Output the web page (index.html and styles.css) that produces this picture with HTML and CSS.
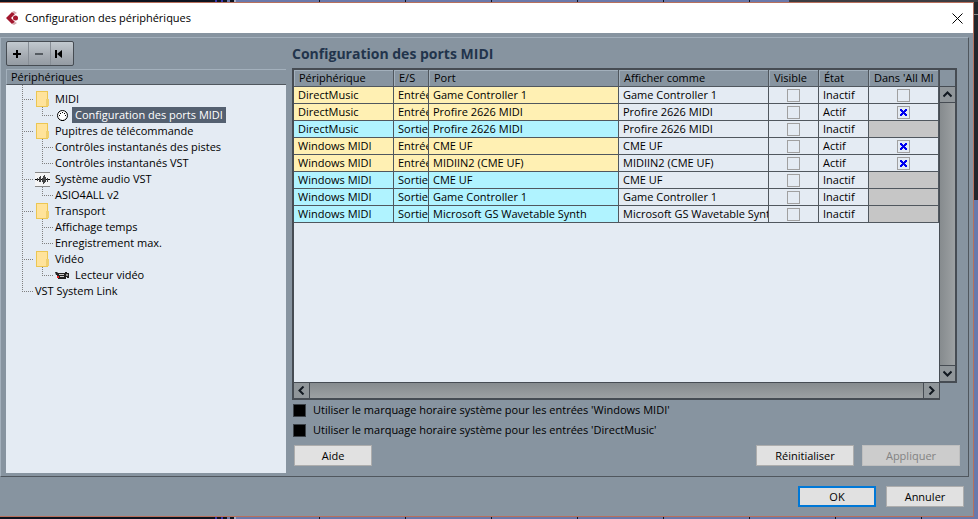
FILE: index.html
```html
<!DOCTYPE html>
<html lang="fr">
<head>
  <meta charset="UTF-8">
  <meta name="viewport" content="width=device-width, initial-scale=1.0">
  <title>Configuration des périphériques</title>
  <link rel="stylesheet" href="styles.css">
</head>
<body>
  <div class="window">
    <header class="titlebar">
      <svg class="app-icon" width="14" height="16" viewBox="0 0 14 16">
        <path d="M0 8l6-6 3 2-4 4 4 4-3 2z" fill="#a3172e"/>
        <path d="M6 2l2-1 3 2-2 1zM6 14l2 1 3-2-2-1z" fill="#d3a3aa"/>
        <circle cx="9.500" cy="8" r="2.500" fill="#a3172e"/>
      </svg>
      <h1>Configuration des périphériques</h1>
      <button class="close" aria-label="Fermer">
        <svg width="11" height="11" viewBox="0 0 11 11"><path d="M.5.5l10 10M10.500.5l-10 10" stroke="#000" fill="none"/></svg>
      </button>
    </header>

    <main class="panel">
      <section class="devices">
        <div class="toolbar">
          <button aria-label="Ajouter"><svg width="20" height="22" viewBox="0 0 20 22"><path d="M6 11h8M10 7v8" stroke="#000" stroke-width="2"/></svg></button>
          <button aria-label="Supprimer"><svg width="20" height="22" viewBox="0 0 20 22"><path d="M6 11h8" stroke="#555b61" stroke-width="2"/></svg></button>
          <button aria-label="Réinitialiser"><svg width="20" height="22" viewBox="0 0 20 22"><path d="M4 7h2v8H4zM11 7v8l-5-4z"/></svg></button>
        </div>
        <h2 class="devices-head">Périphériques</h2>
        <div class="devices-list">
          <ul class="tree">
            <li>
              <div class="node"><i class="folder"></i><span>MIDI</span></div>
              <ul>
                <li><div class="node selected">
                  <svg width="15" height="15" viewBox="0 0 15 15"><circle cx="7.500" cy="7.500" r="5" fill="#fff" stroke="#000"/><path d="M4 7h1v1H4zM10 7h1v1h-1zM5 5h1v1H5zM9 5h1v1H9zM7 4h1v1H7zM6 12h3v1H6z"/></svg>
                  <span>Configuration des ports MIDI</span></div></li>
              </ul>
            </li>
            <li>
              <div class="node"><i class="folder"></i><span>Pupitres de télécommande</span></div>
              <ul>
                <li><div class="node"><span>Contrôles instantanés des pistes</span></div></li>
                <li><div class="node"><span>Contrôles instantanés VST</span></div></li>
              </ul>
            </li>
            <li>
              <div class="node">
                <svg width="15" height="15" viewBox="0 0 15 15"><path d="M0 0h15v15H0z" fill="#f4f4f4"/><path d="M0 .5h15M0 14.500h15" stroke="#888"/><path d="M0 7.500h15" stroke="#000" stroke-width="1"/><path d="M2.500 6v3M4.500 5v5M5.500 4v6M7.500 6v4M8.500 4v8M9.500 3v8M10.500 5v5M12.500 6v4" stroke="#444"/></svg>
                <span>Système audio VST</span></div>
              <ul>
                <li><div class="node"><span>ASIO4ALL v2</span></div></li>
              </ul>
            </li>
            <li>
              <div class="node"><i class="folder"></i><span>Transport</span></div>
              <ul>
                <li><div class="node"><span>Affichage temps</span></div></li>
                <li><div class="node"><span>Enregistrement max.</span></div></li>
              </ul>
            </li>
            <li>
              <div class="node"><i class="folder"></i><span>Vidéo</span></div>
              <ul>
                <li><div class="node">
                  <svg width="15" height="15" viewBox="0 0 15 15"><path d="M0 4h2l1 1h7V4h2v1h2v5h-2V9h-1v2H3V8H2V7H1z" fill="#222"/><path d="M4 6h5v1H4zM5 8h4v1H5z" fill="#ccc"/><path d="M11 6h2v2h-2z" fill="#999"/><path d="M2 8h2v2H2z" fill="#e02020"/></svg>
                  <span>Lecteur vidéo</span></div></li>
              </ul>
            </li>
            <li><div class="node"><span>VST System Link</span></div></li>
          </ul>
        </div>
      </section>

      <section class="settings">
        <h2>Configuration des ports MIDI</h2>
        <div class="list">
          <div class="list-main">
            <div class="view">
              <table>
                <colgroup>
                  <col class="c-device"><col class="c-io"><col><col class="c-name"><col class="c-small"><col class="c-small"><col class="c-all">
                </colgroup>
                <thead>
                  <tr><th>Périphérique</th><th>E/S</th><th>Port</th><th>Afficher comme</th><th>Visible</th><th>État</th><th>Dans 'All MI</th></tr>
                </thead>
                <tbody>
                  <tr class="in"><td>DirectMusic</td><td>Entrée</td><td>Game Controller 1</td><td>Game Controller 1</td><td class="check"><input type="checkbox" aria-label="Visible"></td><td>Inactif</td><td class="check"><input type="checkbox" aria-label="All MIDI"></td></tr>
                  <tr class="in"><td>DirectMusic</td><td>Entrée</td><td>Profire 2626 MIDI</td><td>Profire 2626 MIDI</td><td class="check"><input type="checkbox" aria-label="Visible"></td><td>Actif</td><td class="check"><input type="checkbox" aria-label="All MIDI" checked></td></tr>
                  <tr class="out"><td>DirectMusic</td><td>Sortie</td><td>Profire 2626 MIDI</td><td>Profire 2626 MIDI</td><td class="check"><input type="checkbox" aria-label="Visible"></td><td>Inactif</td><td class="none"></td></tr>
                  <tr class="in"><td>Windows MIDI</td><td>Entrée</td><td>CME UF</td><td>CME UF</td><td class="check"><input type="checkbox" aria-label="Visible"></td><td>Actif</td><td class="check"><input type="checkbox" aria-label="All MIDI" checked></td></tr>
                  <tr class="in"><td>Windows MIDI</td><td>Entrée</td><td>MIDIIN2 (CME UF)</td><td>MIDIIN2 (CME UF)</td><td class="check"><input type="checkbox" aria-label="Visible"></td><td>Actif</td><td class="check"><input type="checkbox" aria-label="All MIDI" checked></td></tr>
                  <tr class="out"><td>Windows MIDI</td><td>Sortie</td><td>CME UF</td><td>CME UF</td><td class="check"><input type="checkbox" aria-label="Visible"></td><td>Inactif</td><td class="none"></td></tr>
                  <tr class="out"><td>Windows MIDI</td><td>Sortie</td><td>Game Controller 1</td><td>Game Controller 1</td><td class="check"><input type="checkbox" aria-label="Visible"></td><td>Inactif</td><td class="none"></td></tr>
                  <tr class="out"><td>Windows MIDI</td><td>Sortie</td><td>Microsoft GS Wavetable Synth</td><td>Microsoft GS Wavetable Synth</td><td class="check"><input type="checkbox" aria-label="Visible"></td><td>Inactif</td><td class="none"></td></tr>
                </tbody>
              </table>
            </div>
            <div class="hscroll">
              <button aria-label="Gauche"><svg width="9" height="9" viewBox="0 0 9 9"><path d="M6.500.5l-4 4 4 4"/></svg></button>
              <button aria-label="Droite"><svg width="9" height="9" viewBox="0 0 9 9"><path d="M2.500.5l4 4-4 4"/></svg></button>
            </div>
          </div>
          <div class="vscroll">
            <div class="corner"></div>
            <div class="track">
              <button aria-label="Haut"><svg width="9" height="9" viewBox="0 0 9 9"><path d="M.5 6.500l4-4 4 4"/></svg></button>
              <button aria-label="Bas"><svg width="9" height="9" viewBox="0 0 9 9"><path d="M.5 2.500l4 4 4-4"/></svg></button>
            </div>
          </div>
        </div>
        <div class="options">
          <label><input type="checkbox">Utiliser le marquage horaire système pour les entrées 'Windows MIDI'</label>
          <label><input type="checkbox">Utiliser le marquage horaire système pour les entrées 'DirectMusic'</label>
        </div>
        <div class="actions">
          <button class="btn help">Aide</button>
          <button class="btn wide">Réinitialiser</button>
          <button class="btn wide" disabled>Appliquer</button>
        </div>
      </section>
    </main>

    <footer class="footer">
      <button class="btn default">OK</button>
      <button class="btn">Annuler</button>
    </footer>
  </div>
</body>
</html>
```

FILE: styles.css
```css
* { margin: 0; padding: 0; box-sizing: border-box; }

body {
  min-height: 100vh;
  padding: 2px 4px 2px 0;
  display: flex;
  background:
    linear-gradient(to right, #0d1420 0 215px, #3a3ab0 215px 217px, #0d1420 217px 221px, #3a3ab0 221px 223px, #0d1420 223px 227px, #6a79ab 227px 230px, #0d1420 230px 234px, #a5adc5 234px 236px) 0 0 / 236px 100% no-repeat,
    linear-gradient(#3c3d42, #3c3d42) right 0 top 0 / 189px 2px no-repeat,
    linear-gradient(#8a8a8a, #8a8a8a) right 0 top 14px / 4px 1px no-repeat,
    linear-gradient(#22262b, #22262b) right top / 4px 200px no-repeat,
    repeating-linear-gradient(to right, #6a79ab 0 61px, #0d1420 61px 62px, #6a79ab 62px 86px);
  font: 11px/16px "Open Sans", "Noto Sans", sans-serif;
  color: #000;
}
button, input { font: inherit; color: inherit; }
svg { display: block; flex: none; }
ul { list-style: none; }

.window {
  flex: 1;
  display: flex;
  flex-direction: column;
  background: #8794a0;
  border: 1px solid #b8705c;
  border-left: 0;
}

.titlebar { display: flex; align-items: center; height: 30px; padding: 0 10px 0 6px; background: #fff; }
.titlebar h1 { flex: 1; margin-left: 5px; font-size: 11px; font-weight: 400; }
.close { border: 0; background: none; }

/* main panel */
.panel {
  flex: 1;
  display: flex;
  gap: 6px;
  margin: 4px 4px 0 0;
  padding: 3px 0 3px 5px;
  border: 1px solid #a3b0bc;
  border-right-color: #50575e;
  border-bottom-color: #50575e;
}
.devices { flex: 0 0 280px; display: flex; flex-direction: column; }
.toolbar {
  display: flex;
  align-self: flex-start;
  border: 1px solid #464c53;
  border-radius: 2px;
  background: linear-gradient(#c2c9cf, #a7adb4 55%, #949ba3);
}
.toolbar button { width: 22px; height: 23px; border: 0; border-right: 1px solid #878e96; background: none; }
.toolbar button:last-child { border-right: 0; }
.devices-head {
  height: 16px;
  margin-top: 3px;
  padding-left: 4px;
  border: 1px solid #a3b0bc;
  border-width: 1px 0 1px 1px;
  border-bottom-color: #50575e;
  font-size: 11px;
  font-weight: 400;
  line-height: 14px;
}
.devices-list { flex: 1; background: #e4ebf3; padding-left: 16px; }

/* tree: each item draws its own stretch of the vertical guide */
.tree li { background: repeating-linear-gradient(#808080 0 1px, transparent 1px 2px) 0 0 / 1px 100% no-repeat; }
.tree li:last-child { background-size: 1px 8px; }
.tree > li:first-child { padding-top: 6px; }
.tree ul { margin-left: 20px; }
.node { display: flex; align-items: center; height: 16px; white-space: nowrap; }
.node::before {
  content: "";
  width: 11px;
  height: 1px;
  margin-right: 2px;
  background: repeating-linear-gradient(to right, #808080 0 1px, transparent 1px 2px);
}
.node i, .node svg { margin-right: 5px; }
.node span { margin-left: -3px; padding: 0 3px; }
.selected span { background: #546070; color: #fff; }
.folder {
  width: 15px;
  height: 16px;
  background:
    linear-gradient(#f0d070, #f0d070) 11px 8px / 3px 7px no-repeat,
    linear-gradient(#ffe39b, #ffe39b) 2px 1px / 10px 14px no-repeat,
    linear-gradient(#ecc652, #ecc652) 1px 0 / 12px 16px no-repeat;
}

/* port list */
.settings { flex: 1; min-width: 0; display: flex; flex-direction: column; }
.settings h2 { color: #22344c; font-size: 14px; line-height: 22px; margin-top: 2px; }
.list { flex: 1; display: flex; margin: 3px 11px 0 0; }
.list-main {
  flex: 1;
  min-width: 0;
  display: flex;
  flex-direction: column;
  border: 2px solid #464c53;
  border-right-width: 1px;
}
.view { flex: 1; background: #e4ebf3; }
table { width: 100%; table-layout: fixed; border-collapse: separate; border-spacing: 0; }
.c-device { width: 100px; }
.c-io { width: 35px; }
.c-name { width: 150px; }
.c-small { width: 50px; }
.c-all { width: 70px; }
th, td {
  overflow: hidden;
  border: 0 solid #50575e;
  border-width: 0 1px 1px 0;
  font-weight: 400;
  text-align: left;
  white-space: nowrap;
}
th { height: 17px; padding-left: 5px; line-height: 16px; background: #8794a0; box-shadow: inset 1px 1px #a3b0bc; }
td { height: 17px; padding-left: 4px; line-height: 16px; }
.in td:nth-child(-n+3) { background: #fff0b3; }
.out td:nth-child(-n+3) { background: #b0f3ff; }
td.none { background: #c6c6c6; }
td.check { padding: 0; }
.check input {
  appearance: none;
  display: block;
  width: 13px;
  height: 13px;
  margin: 0 auto;
  border: 1px solid #a0a0a0;
}
.check input:checked {
  background:
    linear-gradient(45deg, transparent 37%, #0000f0 37% 63%, transparent 63%) center / 7px 7px no-repeat,
    linear-gradient(-45deg, transparent 37%, #0000f0 37% 63%, transparent 63%) center / 7px 7px no-repeat;
}

.hscroll {
  display: flex;
  justify-content: space-between;
  height: 16px;
  border-top: 1px solid #464c53;
  background: linear-gradient(#868b8e, #9da1a3);
}
.vscroll {
  display: flex;
  flex-direction: column;
  width: 17px;
  margin-bottom: 17px;
  border: 2px solid #464c53;
  border-left: 0;
}
.corner { height: 17px; border-bottom: 1px solid #464c53; }
.track {
  flex: 1;
  display: flex;
  flex-direction: column;
  justify-content: space-between;
  background: linear-gradient(to right, #868b8e, #9da1a3);
}
.hscroll button, .vscroll button {
  display: flex;
  align-items: center;
  justify-content: center;
  width: 16px;
  height: 15px;
  border: 0 solid #464c53;
  background: #90969a;
}
.vscroll button { width: 15px; height: 16px; }
.hscroll button:first-child { border-right-width: 1px; }
.hscroll button:last-child { border-left-width: 1px; }
.vscroll button:first-child { border-bottom-width: 1px; }
.vscroll button:last-child { border-top-width: 1px; }
.hscroll path, .vscroll path { fill: none; stroke: #111820; stroke-width: 2; }

.options { display: flex; flex-direction: column; align-items: flex-start; gap: 4px; margin-top: 2px; }
.options label { display: flex; align-items: center; gap: 7px; padding-left: 1px; }
.options input { appearance: none; width: 13px; height: 13px; border: 1px solid #3c4248; background: #000; }

.actions { display: flex; gap: 8px; margin: 7px 8px 7px 2px; }
.help { margin-right: auto; }
.btn { width: 78px; height: 21px; border: 1px solid #adadad; background: #e1e1e1; line-height: 19px; }
.wide { width: 98px; }
.btn:disabled { background: #ccc; border-color: #bfbfbf; color: #838383; }
.default { border: 2px solid #0078d7; line-height: 17px; }
.footer { display: flex; justify-content: flex-end; gap: 10px; padding: 9px 9px; }
```
